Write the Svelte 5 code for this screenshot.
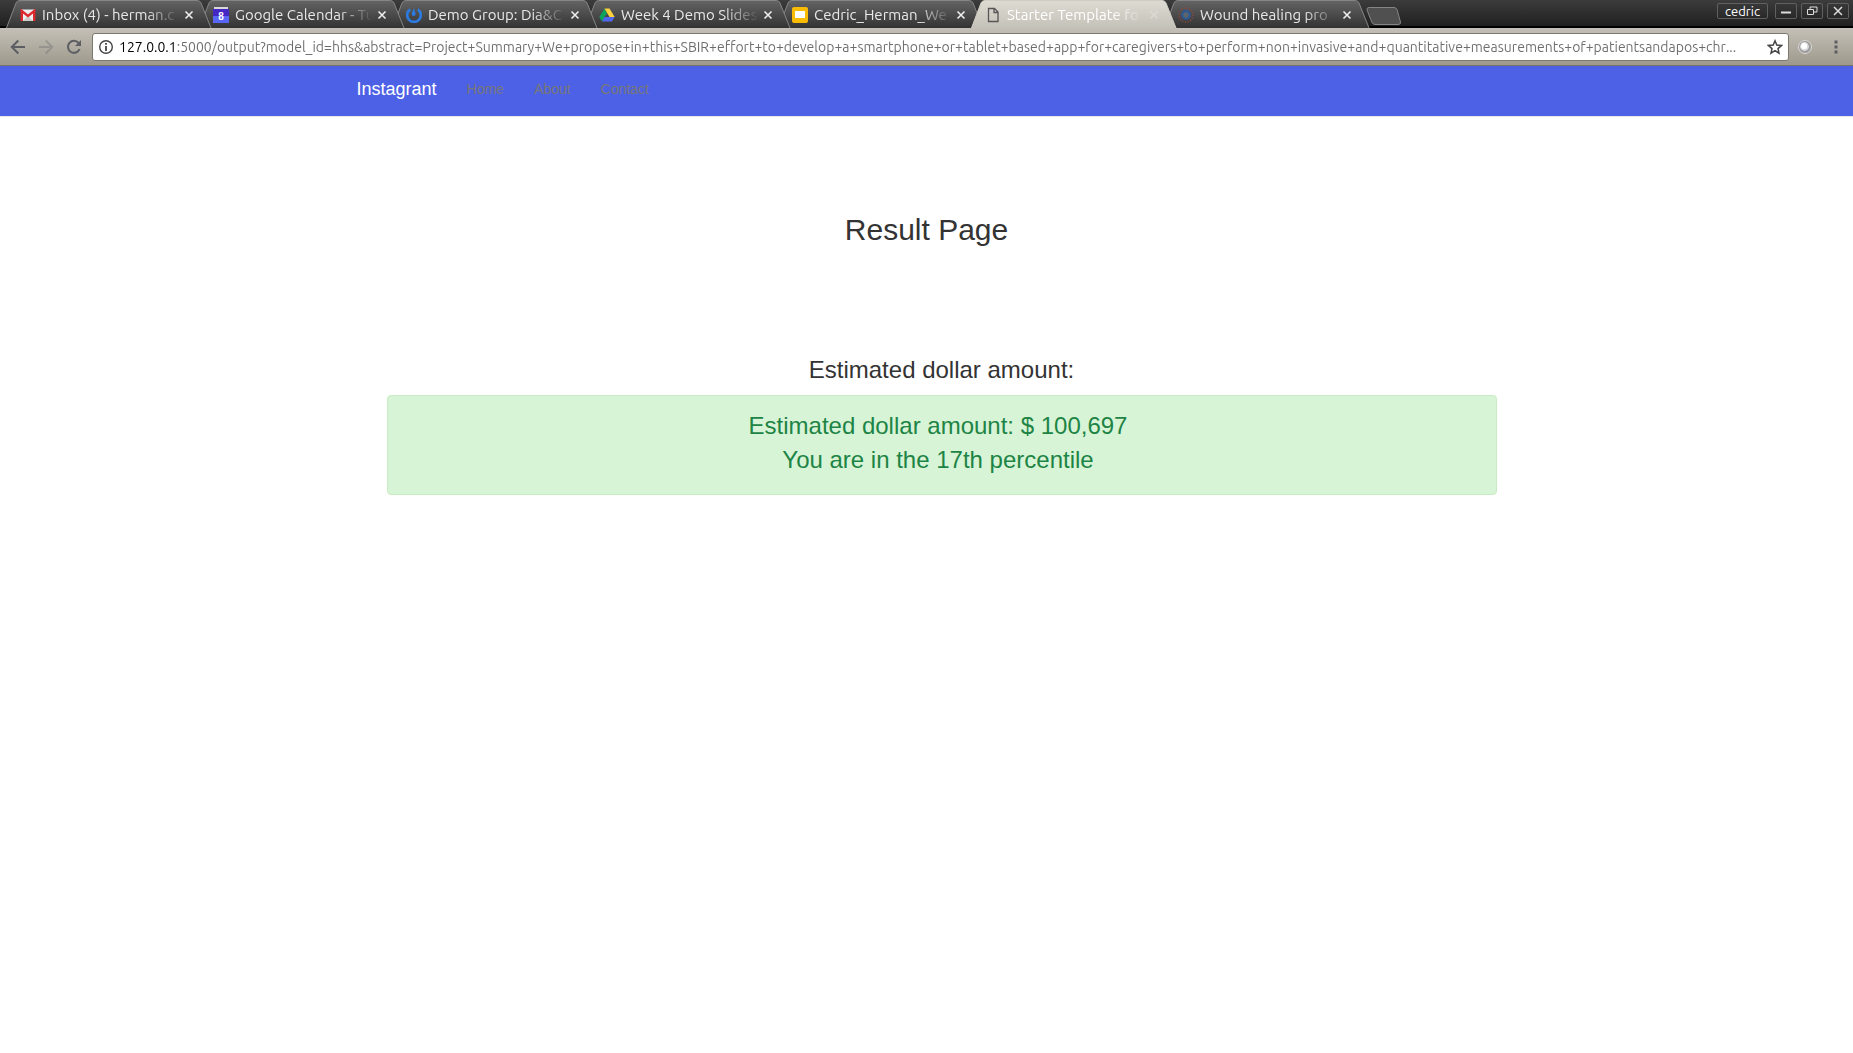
<script>
  const tabs = [
    { title: 'Inbox (4) - herman.c', icon: 'gmail' },
    { title: 'Google Calendar - Tu', icon: 'calendar' },
    { title: 'Demo Group: Dia&C', icon: 'power' },
    { title: 'Week 4 Demo Slides', icon: 'drive' },
    { title: 'Cedric_Herman_We', icon: 'slides' },
    { title: 'Starter Template fo', icon: 'page', active: true },
    { title: 'Wound healing pro', icon: 'gear' },
  ];
  const links = ['Home', 'About', 'Contact'];
  let address = $state(
    '127.0.0.1:5000/output?model_id=hhs&abstract=Project+Summary+We+propose+in+this+SBIR+effort+to+develop+a+smartphone+or+tablet+based+app+for+caregivers+to+perform+non+invasive+and+quantitative+measurements+of+patientsandapos+chr...'
  );
</script>

<div class="titlebar">
  <div class="tabs">
    {#each tabs as tab, i}
      <div class="tab" class:active={tab.active} style="z-index: {tab.active ? 20 : 10 - i}">
        <svg class="shape" viewBox="0 0 206 28" aria-hidden="true">
          <defs>
            <linearGradient id="fill{i}" x1="0" y1="0" x2="0" y2="1">
              <stop offset="0" stop-color={tab.active ? '#dedbd3' : '#646464'} />
              <stop offset="1" stop-color={tab.active ? '#c4c1b8' : '#333333'} />
            </linearGradient>
          </defs>
          <path d="M0.5 28L10 3Q11 .5 14 .5H191Q194 .5 195 3L205 28" fill="url(#fill{i})" stroke={tab.active ? '#d0cdc5' : '#858585'} />
        </svg>
        <button class="label">
          <svg class="favicon" viewBox="0 0 16 16" aria-hidden="true">
            {#if tab.icon === 'gmail'}
              <rect x="1" y="2.5" width="14" height="11.5" fill="#eee" />
              <path d="M3 14L8 9L13 14" fill="#ccc" />
              <path d="M1.8 14V4L8 9L14.2 4V14" fill="none" stroke="#dd2930" stroke-width="2.4" />
            {:else if tab.icon === 'calendar'}
              <path d="M1 0H15V3H1Z" fill="#d8d8d8" />
              <path d="M0 2H16V9H0Z" fill="#4527c4" />
              <path d="M0 9H16V16H0Z" fill="#5865f5" />
              <text x="8" y="12.5" text-anchor="middle" font-size="10" font-weight="700" fill="#fff">8</text>
            {:else if tab.icon === 'power'}
              <path d="M4.2 2.4A6.8 6.8 0 1 0 11.8 2.4" fill="none" stroke="#2b7be3" stroke-width="2.6" />
              <path d="M8.6 .5Q7.8 2.5 9.2 5Q10.4 8.8 7.8 9Q5 8.8 6 5.5Q7 3 8.6 .5Z" fill="#2b7be3" />
            {:else if tab.icon === 'drive'}
              <path d="M5.5 1.5L8 6L3 14.5L.3 10Z" fill="#0fa35c" />
              <path d="M5.5 1.5H10.5L15.7 10H10.5Z" fill="#ffd23f" />
              <path d="M5.5 10H15.7L13 14.5H3Z" fill="#4f67ee" />
            {:else if tab.icon === 'slides'}
              <rect width="16" height="16" rx="2" fill="#f9bb04" />
              <rect x="3" y="4" width="10" height="7" fill="#fff" />
            {:else if tab.icon === 'page'}
              <path d="M3.5 1.5H9.5L13 5V14.5H3.5ZM9 1.5V5.5H13" fill="none" stroke="#555" stroke-width="1.3" />
            {:else}
              <circle cx="8" cy="8" r="7" fill="none" stroke="#8c4a44" stroke-width="1.8" stroke-dasharray="1 1.75" />
              <circle cx="8" cy="8" r="3.8" fill="#5d656c" stroke="#2d5a94" stroke-width="2.2" />
            {/if}
          </svg>
          <span class="title">{tab.title}</span>
        </button>
        <button class="close" aria-label="Close tab">
          <svg viewBox="0 0 10 10" aria-hidden="true"><path d="M1.5 1.5L8.5 8.5M8.5 1.5L1.5 8.5" /></svg>
        </button>
      </div>
    {/each}
    <button class="newtab" aria-label="New tab">
      <svg viewBox="0 0 36 18" aria-hidden="true">
        <path d="M3 .5H28Q30 .5 31 2.5L34.5 15Q35 17.5 32 17.5H9Q7 17.5 6 15.5L1 3Q.5 .5 3 .5Z" fill="#505050" stroke="#858585" />
      </svg>
    </button>
  </div>
  <div class="window">
    <button class="user">cedric</button>
    <button aria-label="Minimize"><svg viewBox="0 0 12 12"><path d="M1 7.5H11" stroke-width="2" /></svg></button>
    <button aria-label="Restore"><svg viewBox="0 0 12 12"><path d="M1.5 4.5H7.5V9.5H1.5ZM4 4V2H11V7H8" /></svg></button>
    <button aria-label="Close"><svg viewBox="0 0 12 12"><path d="M2 2L10 10M10 2L2 10" stroke-width="1.5" /></svg></button>
  </div>
</div>

<div class="toolbar">
  <button class="tool" aria-label="Back">
    <svg viewBox="0 0 16 16"><path d="M15 8H2M8.3 1.5L1.8 8L8.3 14.5" /></svg>
  </button>
  <button class="tool faded" aria-label="Forward">
    <svg viewBox="0 0 16 16"><path d="M1 8H14M7.7 1.5L14.2 8L7.7 14.5" /></svg>
  </button>
  <button class="tool" aria-label="Reload">
    <svg viewBox="0 0 16 16"><path d="M13.6 10A6 6 0 1 1 12.6 4" /><path d="M15 1V7H9Z" class="solid" /></svg>
  </button>
  <div class="omnibox">
    <svg viewBox="0 0 16 16" aria-hidden="true">
      <circle cx="8" cy="8" r="6.3" fill="none" stroke="#444" stroke-width="1.4" />
      <path d="M8 7V12M8 4V5.8" stroke="#444" stroke-width="1.8" />
    </svg>
    <input type="text" aria-label="Address" spellcheck="false" bind:value={address} />
    <button class="star" aria-label="Bookmark this page">
      <svg viewBox="0 0 16 16"><path d="M8 1.8L9.8 6.1L14.5 6.5L11 9.6L12 14.2L8 11.7L4 14.2L5 9.6L1.5 6.5L6.2 6.1Z" fill="none" stroke="#444" stroke-width="1.5" /></svg>
    </button>
  </div>
  <button class="tool extension" aria-label="Extension">
    <svg viewBox="0 0 16 16">
      <circle cx="8" cy="8" r="6.5" fill="#9c9c9c" stroke="#dcdad5" stroke-width="1" />
      <circle cx="7.5" cy="7.5" r="4.4" fill="#dcdcdc" stroke="none" />
      <circle cx="7" cy="7" r="3" fill="#fff" stroke="none" />
    </svg>
  </button>
  <button class="tool menu" aria-label="Menu">
    <svg viewBox="0 0 16 16"><path d="M6.5 1.5H9.5V4.5H6.5ZM6.5 6.5H9.5V9.5H6.5ZM6.5 11.5H9.5V14.5H6.5Z" class="solid" /></svg>
  </button>
</div>

<nav>
  <div class="container">
    <a class="brand" href="#top">Instagrant</a>
    {#each links as link}
      <a href="#{link.toLowerCase()}">{link}</a>
    {/each}
  </div>
</nav>

<main class="container">
  <h1>Result Page</h1>
  <section>
    <h2>Estimated dollar amount:</h2>
    <div class="alert" role="status">
      <p>Estimated dollar amount: $ 100,697</p>
      <p>You are in the 17th percentile</p>
    </div>
  </section>
</main>

<style>
  :global(body) {
    background: #fff;
    color: #333;
    font: 14px/20px 'Liberation Sans', Arial, sans-serif;
  }
  button {
    padding: 0;
    border: 0;
    background: none;
    color: inherit;
    font: inherit;
  }
  svg {
    display: block;
    flex: none;
  }
  .titlebar {
    display: flex;
    justify-content: space-between;
    height: 28px;
    box-sizing: border-box;
    border-bottom: 2px solid #000;
    padding: 0 4px 0 6px;
    background: linear-gradient(#3c3c3c, #202020);
    color: #e8e8e8;
    font: 15px/20px Ubuntu, 'Noto Sans', sans-serif;
  }
  .tabs {
    display: flex;
    height: 28px;
  }
  .tab {
    position: relative;
    display: flex;
    align-items: center;
    width: 205px;
    height: 28px;
    box-sizing: border-box;
    margin-right: -12px;
    padding: 2px 16px 0 14px;
  }
  .tab.active {
    color: #fff;
  }
  .shape {
    position: absolute;
    inset: 0;
    width: 206px;
    height: 28px;
  }
  .label {
    position: relative;
    display: flex;
    align-items: center;
    flex: 1;
    gap: 6px;
    min-width: 0;
  }
  .favicon {
    width: 16px;
    height: 16px;
    font-family: 'Liberation Sans', sans-serif;
  }
  .title {
    flex: 1;
    overflow: hidden;
    white-space: nowrap;
    text-align: left;
    mask-image: linear-gradient(to right, #000 75%, transparent);
  }
  .close {
    position: relative;
    padding: 3px 1px 3px 4px;
  }
  .close svg {
    width: 10px;
    height: 10px;
    stroke: #eee;
    stroke-width: 1.6;
  }
  .active .close {
    opacity: 0.35;
  }
  .newtab {
    margin: 7px 0 3px 9px;
  }
  .newtab svg {
    width: 36px;
    height: 18px;
  }
  .window {
    display: flex;
    gap: 4px;
    padding-top: 3px;
    font-size: 13px;
    line-height: 14px;
  }
  .window button {
    display: grid;
    place-items: center;
    width: 22px;
    height: 16px;
    box-sizing: border-box;
    border: 1px solid #606060;
    border-radius: 2px;
  }
  .window .user {
    width: 51px;
    margin-right: 3px;
    color: #fff;
  }
  .window svg {
    width: 12px;
    height: 12px;
    fill: none;
    stroke: #ddd;
  }
  .toolbar {
    display: flex;
    align-items: center;
    gap: 12px;
    height: 38px;
    box-sizing: border-box;
    border-bottom: 1px solid #77746b;
    padding: 0 9px 0 10px;
    background: linear-gradient(#c4c0b7, #9e998c);
  }
  .tool svg {
    width: 16px;
    height: 16px;
    fill: none;
    stroke: #5c5e63;
    stroke-width: 2;
  }
  .tool .solid {
    fill: #5c5e63;
    stroke: none;
  }
  .tool.faded {
    opacity: 0.3;
  }
  .tool.extension {
    margin-left: -4px;
  }
  .tool.menu {
    margin-left: 3px;
  }
  .omnibox {
    display: flex;
    align-items: center;
    flex: 1;
    gap: 5px;
    height: 28px;
    box-sizing: border-box;
    margin-left: -2px;
    border: 1px solid #7b786f;
    border-radius: 3px;
    padding: 0 5px;
    background: #fff;
  }
  .omnibox svg {
    width: 16px;
    height: 16px;
  }
  input {
    flex: 1;
    min-width: 0;
    height: 24px;
    border: 0;
    padding: 0;
    background: linear-gradient(to right, #000 57px, #6c6c6c 57px) text;
    color: transparent;
    caret-color: #000;
    font: 14px/24px Ubuntu, 'Noto Sans', sans-serif;
    font-kerning: none;
  }
  nav {
    border-bottom: 1px solid #e7e7e7;
    background: #4d61e6;
  }
  .container {
    max-width: 1140px;
    margin: 0 auto;
    padding: 0 15px;
  }
  nav .container {
    display: flex;
    gap: 30px;
  }
  nav a {
    padding: 13px 0 17px;
    color: #777;
    text-decoration: none;
  }
  nav .brand {
    color: #fff;
    font-size: 18px;
  }
  main {
    text-align: center;
  }
  h1,
  h2,
  p {
    margin: 0;
    font-weight: 400;
  }
  h1 {
    padding: 96px 0 106px;
    font-size: 30px;
    line-height: 34px;
  }
  section {
    margin-left: 30px;
  }
  h2 {
    padding-bottom: 8px;
    font-size: 24px;
    line-height: 34px;
  }
  .alert {
    border: 1px solid #c9edc2;
    border-radius: 4px;
    padding: 13px 22px 17px 15px;
    background: #d8f4d7;
    color: #1d8445;
    font-size: 24px;
    line-height: 34px;
  }
</style>
